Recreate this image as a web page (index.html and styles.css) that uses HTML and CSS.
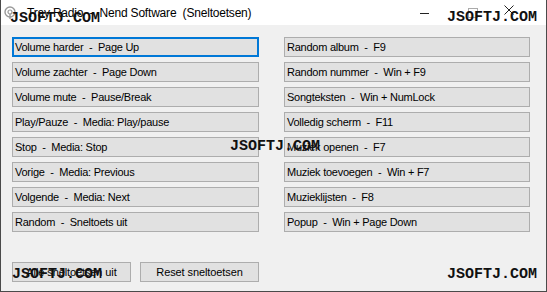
FILE: index.html
```html
<!DOCTYPE html>
<html lang="nl">
<head>
    <meta charset="UTF-8">
    <title>Tray Radio - Sneltoetsen</title>
    <link rel="stylesheet" href="styles.css">
</head>
<body>
    <div class="window">
        <div class="title-bar">
            <svg class="app-icon" width="12" height="14" viewBox="0 0 12 14">
                <circle cx="6" cy="6" r="5" fill="none" stroke="#9a9a9a" stroke-width="1.4"/>
                <circle cx="6" cy="6" r="2" fill="none" stroke="#9a9a9a" stroke-width="1.2"/>
                <path d="M6 8 L6 13" stroke="#9a9a9a" stroke-width="1.4"/>
            </svg>
            <span class="title">Tray Radio  -  Nend Software  (Sneltoetsen)</span>
            <div class="controls">
                <span class="ctl min"></span>
                <span class="ctl max"></span>
                <svg class="ctl close" width="10" height="10" viewBox="0 0 10 10">
                    <path d="M0.5 0.5 L9.5 9.5 M9.5 0.5 L0.5 9.5" stroke="#222" stroke-width="1"/>
                </svg>
            </div>
        </div>

        <div class="content">
            <div class="keys">
                <div class="key focused">Volume harder  -  Page Up</div>
                <div class="key">Random album  -  F9</div>
                <div class="key">Volume zachter  -  Page Down</div>
                <div class="key">Random nummer  -  Win + F9</div>
                <div class="key">Volume mute  -  Pause/Break</div>
                <div class="key">Songteksten  -  Win + NumLock</div>
                <div class="key">Play/Pauze  -  Media: Play/pause</div>
                <div class="key">Volledig scherm  -  F11</div>
                <div class="key">Stop  -  Media: Stop</div>
                <div class="key">Muziek openen  -  F7</div>
                <div class="key">Vorige  -  Media: Previous</div>
                <div class="key">Muziek toevoegen  -  Win + F7</div>
                <div class="key">Volgende  -  Media: Next</div>
                <div class="key">Muzieklijsten  -  F8</div>
                <div class="key">Random  -  Sneltoets uit</div>
                <div class="key">Popup  -  Win + Page Down</div>
            </div>

            <div class="actions">
                <button class="btn">Alle sneltoetsen uit</button>
                <button class="btn">Reset sneltoetsen</button>
            </div>
        </div>

        <span class="mark mark-tl">JSOFTJ.COM</span>
        <span class="mark mark-tr">JSOFTJ.COM</span>
        <span class="mark mark-c">JSOFTJ.COM</span>
        <span class="mark mark-bl">JSOFTJ.COM</span>
        <span class="mark mark-br">JSOFTJ.COM</span>
    </div>
</body>
</html>
```

FILE: styles.css
```css
body {
    margin: 0;
    padding: 0;
    font-family: "Liberation Sans", Arial, sans-serif;
    font-size: 12px;
    color: #000;
    background-color: #f0f0f0;
}

.window {
    position: relative;
    width: 547px;
    height: 292px;
    box-sizing: border-box;
    border: 1px solid #4a4a4a;
    border-top: none;
    background-color: #f0f0f0;
    display: flex;
    flex-direction: column;
    overflow: hidden;
}

.title-bar {
    height: 25px;
    background-color: #fff;
    display: flex;
    align-items: center;
    padding-left: 3px;
}

.app-icon {
    margin-right: 11px;
}

.title {
    white-space: pre;
    font-size: 12px;
    letter-spacing: -0.2px;
}

.controls {
    margin-left: auto;
    display: flex;
    align-items: center;
}

.ctl {
    display: block;
}

.ctl.min {
    width: 9px;
    height: 1px;
    background-color: #222;
    margin-right: 39px;
    margin-top: 1px;
}

.ctl.max {
    width: 8px;
    height: 8px;
    border: 1px solid #aaa;
    margin-right: 26px;
}

.ctl.close {
    margin-right: 32px;
    margin-top: -6px;
}

.content {
    flex-grow: 1;
    padding: 12px 0 9px 11px;
    display: flex;
    flex-direction: column;
}

.keys {
    display: grid;
    grid-template-columns: 247px 246px;
    grid-auto-rows: 20px;
    column-gap: 25px;
    row-gap: 5px;
}

.key {
    background-color: #e1e1e1;
    border: 1px solid #adadad;
    box-sizing: border-box;
    white-space: pre;
    padding-left: 2px;
    font-size: 11px;
    line-height: 18px;
    letter-spacing: -0.25px;
}

.key.focused {
    border: 2px solid #0078d7;
    padding-left: 1px;
    line-height: 16px;
}

.actions {
    margin-top: auto;
    display: flex;
    gap: 9px;
}

.btn {
    width: 119px;
    height: 20px;
    background-color: #e1e1e1;
    border: 1px solid #adadad;
    font-family: "Liberation Sans", Arial, sans-serif;
    font-size: 11px;
    letter-spacing: -0.1px;
    color: #000;
    padding: 0;
    margin: 0;
}

.mark {
    position: absolute;
    font-family: "Liberation Mono", "Courier New", monospace;
    font-size: 15px;
    font-weight: bold;
    color: #111;
    line-height: 15px;
    pointer-events: none;
}

.mark-tl { left: 9px; top: 11px; }
.mark-tr { left: 446px; top: 10px; }
.mark-c { left: 229px; top: 139px; }
.mark-bl { left: 11px; top: 267px; }
.mark-br { left: 446px; top: 267px; }
```
